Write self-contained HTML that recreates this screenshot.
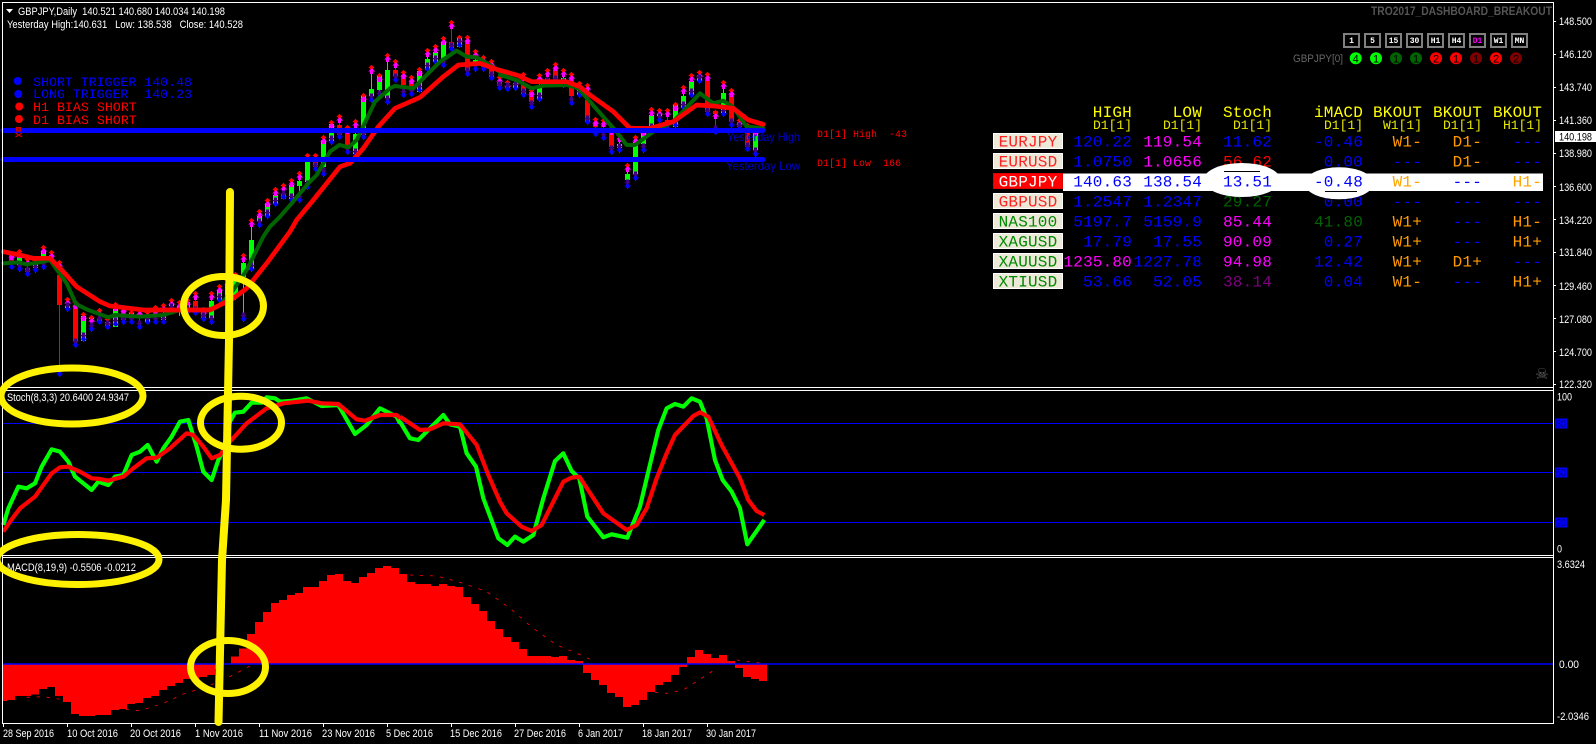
<!DOCTYPE html>
<html>
<head>
<meta charset="utf-8">
<title>GBPJPY,Daily</title>
<style>
html,body{margin:0;padding:0;background:#000;width:1596px;height:744px;overflow:hidden}
svg{display:block}
.s{font-family:"Liberation Sans",sans-serif;font-size:11px;fill:#fff}
.m{font-family:"Liberation Mono",monospace;font-size:16px;letter-spacing:.2px;text-anchor:end}
.h{fill:#ff0}
.u{font-family:"Liberation Mono",monospace;font-size:13px;fill:#e8e800;text-anchor:end}
.b{fill:#00f}.p{fill:#f0f}.r{fill:#f00}.g{fill:#006400}.v{fill:#800080}.o{fill:#f90}
.t{font-family:"Liberation Mono",monospace;font-size:16px;letter-spacing:.2px;text-anchor:middle}
.l{font-family:"Liberation Mono",monospace;font-size:13.3px}
.w{font-family:"Liberation Mono",monospace;font-size:8px;font-weight:bold;fill:#fff;text-anchor:middle}
.n{font-family:"Liberation Sans",sans-serif;font-size:11px;fill:#000;text-anchor:middle}
</style>
</head>
<body>
<svg width="1596" height="744" viewBox="0 0 1596 744" xmlns="http://www.w3.org/2000/svg">
<defs>
<marker id="mh" markerUnits="userSpaceOnUse" markerWidth="10" markerHeight="12" refX="5" refY="0" orient="0" overflow="visible">
<g transform="translate(5,0)" shape-rendering="crispEdges"><polygon fill="#f00" points="0,0 3.5,3 1.5,3 1.5,4 -1.5,4 -1.5,3 -3.5,3"/><polygon fill="#f0f" points="0,3 3.5,6.5 1.5,6.5 1.5,9 -1.5,9 -1.5,6.5 -3.5,6.5"/></g>
</marker>
<marker id="ml" markerUnits="userSpaceOnUse" markerWidth="10" markerHeight="12" refX="5" refY="10" orient="0" overflow="visible">
<g transform="translate(5,10)" shape-rendering="crispEdges"><polygon fill="#00f" points="0,0 3.5,-3.5 1.5,-3.5 1.5,-5 -1.5,-5 -1.5,-3.5 -3.5,-3.5"/><polygon fill="#400080" points="0,-4 3.5,-7 1.5,-7 1.5,-9.5 -1.5,-9.5 -1.5,-7 -3.5,-7"/></g>
</marker>
</defs>

<rect width="1596" height="744" fill="#000"/>

<!-- wicks -->
<g shape-rendering="crispEdges" fill="none">
<path stroke="#f00" stroke-width="1" d="M11.5 251V267M27.5 257V277M51.5 250V265M59.5 260V377M75.5 300V348M99.5 308V323M107.5 317V330M123.5 305V325M139.5 308V330M155.5 305V323M195.5 291V316M203.5 307V322M283.5 183V200M315.5 153V172M339.5 114V140M347.5 125V155M395.5 59V83M403.5 70V98M411.5 75V97M451.5 20V52M467.5 35V77M483.5 55V72M491.5 59V81M499.5 75V91M507.5 80V92M523.5 72V98M531.5 88V110M547.5 68V87M555.5 62V85M571.5 72V106M587.5 83V125M595.5 117V137M603.5 118V141M611.5 126V155M667.5 108V132M707.5 72V117M715.5 110V135M731.5 88V128M739.5 118V132M747.5 123V152"/>
<path stroke="#0f0" stroke-width="1" d="M19.5 249V272M35.5 258V273M43.5 245V270M67.5 297V312M83.5 312V342M91.5 315V332M115.5 302V327M131.5 310V323M147.5 310V323M163.5 303V323M171.5 298V313M179.5 300V316M187.5 298V315M211.5 291V325M219.5 284V303M227.5 278V300M235.5 272V300M243.5 253V322M251.5 218V272M259.5 209V228M267.5 198V219M275.5 187V207M291.5 178V203M299.5 171V203M307.5 153V190M323.5 135V177M331.5 120V145M355.5 119V158M363.5 93V140M371.5 65V103M379.5 73V100M387.5 53V105M419.5 67V93M427.5 48V72M435.5 44V65M443.5 36V68M459.5 35V48M475.5 49V72M515.5 78V91M539.5 73V102M563.5 68V88M579.5 81V98M619.5 133V153M627.5 163V189M635.5 135V181M643.5 127V153M651.5 107V133M659.5 108V123M675.5 102V128M683.5 85V111M691.5 73V98M699.5 70V84M723.5 80V117M755.5 127V157"/>
<path stroke="#f00" stroke-width="5" d="M11.5 253V261M27.5 268V272M51.5 255V262M59.5 275V305M75.5 305V341M99.5 318V321M107.5 322V326M123.5 310V320M139.5 314V317M155.5 312V316M195.5 301V310M203.5 313V318M283.5 193V199M315.5 162V167M339.5 125V135M347.5 133V148M395.5 70V77M403.5 75V85M411.5 81V87M451.5 42V48M467.5 40V70M483.5 62V67M491.5 67V77M499.5 82V86M507.5 85V88M523.5 85V94M531.5 92V102M547.5 78V84M555.5 68V82M571.5 78V96M587.5 100V122M595.5 123V127M603.5 125V127M611.5 128V147M667.5 120V126M707.5 79V112M715.5 111V114M731.5 93V122M739.5 122V127M747.5 128V147"/>
<path stroke="#0f0" stroke-width="5" d="M19.5 257V265M35.5 262V268M43.5 251V258M67.5 305V308M83.5 316V341M91.5 317V319M115.5 309V327M131.5 313V318M147.5 318V323M163.5 316V320M171.5 304V307M179.5 306V309M187.5 302V310M211.5 301V319M219.5 290V300M227.5 284V295M235.5 280V295M243.5 263V277M251.5 240V270M259.5 216V222M267.5 203V217M275.5 195V204M291.5 185V199M299.5 181V186M307.5 162V182M323.5 140V167M331.5 124V141M355.5 134V154M363.5 95V135M371.5 89V96M379.5 75V90M387.5 70V98M419.5 71V92M427.5 59V70M435.5 52V62M443.5 42V60M459.5 38V47M475.5 60V65M515.5 83V88M539.5 85V100M563.5 78V85M579.5 88V95M619.5 144V148M627.5 174V180M635.5 142V174M643.5 132V144M651.5 115V128M659.5 114V117M675.5 105V127M683.5 96V108M691.5 81V95M699.5 78V81M723.5 93V113M755.5 133V150"/>
</g>
<!-- markers -->
<polyline fill="none" stroke="none" marker-start="url(#mh)" marker-mid="url(#mh)" marker-end="url(#mh)" points="11.5,251 19.5,249 27.5,257 35.5,258 43.5,245 51.5,250 59.5,260 67.5,297 75.5,300 83.5,312 91.5,315 99.5,308 107.5,317 115.5,302 123.5,305 131.5,310 139.5,308 147.5,310 155.5,305 163.5,303 171.5,298 179.5,300 187.5,298 195.5,291 203.5,307 211.5,291 219.5,284 227.5,278 235.5,272 243.5,253 251.5,218 259.5,209 267.5,198 275.5,187 283.5,183 291.5,178 299.5,171 307.5,153 315.5,153 323.5,135 331.5,120 339.5,114 347.5,125 355.5,119 363.5,93 371.5,65 379.5,73 387.5,53 395.5,59 403.5,70 411.5,75 419.5,67 427.5,48 435.5,44 443.5,36 451.5,20 459.5,35 467.5,35 475.5,49 483.5,55 491.5,59 499.5,75 507.5,80 515.5,78 523.5,72 531.5,88 539.5,73 547.5,68 555.5,62 563.5,68 571.5,72 579.5,81 587.5,83 595.5,117 603.5,118 611.5,126 619.5,133 627.5,163 635.5,135 643.5,127 651.5,107 659.5,108 667.5,108 675.5,102 683.5,85 691.5,73 699.5,70 707.5,72 715.5,110 723.5,80 731.5,88 739.5,118 747.5,123 755.5,127"/>
<polyline fill="none" stroke="none" marker-start="url(#ml)" marker-mid="url(#ml)" marker-end="url(#ml)" points="11.5,270 19.5,272 27.5,277 35.5,273 43.5,270 59.5,377 67.5,312 75.5,348 83.5,342 91.5,332 99.5,325 107.5,330 115.5,327 123.5,325 131.5,325 139.5,330 147.5,325 155.5,325 163.5,325 171.5,313 187.5,315 195.5,316 203.5,322 211.5,325 219.5,303 243.5,322 251.5,272 259.5,228 267.5,219 275.5,207 283.5,200 291.5,203 299.5,203 307.5,190 315.5,172 323.5,177 331.5,145 339.5,140 347.5,155 355.5,158 363.5,140 371.5,103 379.5,100 387.5,105 395.5,83 403.5,98 411.5,97 419.5,93 427.5,72 435.5,65 443.5,68 451.5,52 459.5,48 467.5,77 475.5,72 483.5,72 491.5,81 499.5,91 507.5,92 515.5,91 523.5,98 531.5,110 539.5,102 547.5,87 555.5,85 563.5,88 571.5,106 579.5,98 587.5,125 595.5,137 603.5,141 611.5,155 619.5,153 627.5,189 635.5,181 643.5,153 651.5,133 659.5,123 667.5,132 675.5,128 683.5,111 691.5,98 699.5,84 707.5,117 715.5,135 723.5,117 731.5,128 739.5,132 747.5,152 755.5,157"/>

<!-- EMA lines -->
<g fill="none" stroke-linejoin="round" stroke-linecap="round">
<g stroke="#006400" stroke-width="12">
<polyline transform="translate(0,230) scale(.3333)" points="10,100 55,97 80,103 120,97 150,90 175,125 200,160 228,222 260,238 325,262 345,255 420,260 490,255 540,240 630,238 660,225 700,180 740,120 790,20 810,-10 840,-40"/>
<polyline transform="translate(280,20) scale(.3333)" points="0,590 35,550 85,490 110,465 150,395 178,375 205,382 230,360 285,245 330,205 345,198 400,205 440,165 480,125 530,92 560,110 590,112 630,135 680,170 720,185"/>
<polyline transform="translate(500,20) scale(.3333)" points="0,165 50,180 95,205 130,197 200,195 235,205 270,245 345,330 380,375 405,375 460,335 520,305 600,220 640,250 670,242 700,262 740,320 790,325"/>
</g>
<g stroke="#f00" stroke-width="14">
<polyline transform="translate(0,230) scale(.3333)" points="10,65 60,75 100,85 150,85 190,125 230,170 300,215 330,228 430,240 630,240 700,205 740,175 800,100 870,5 890,-30"/>
<polyline transform="translate(280,20) scale(.3333)" points="50,600 100,540 180,440 210,430 250,385 295,320 345,265 420,232 490,170 535,135 600,130 650,148 720,168"/>
<polyline transform="translate(500,20) scale(.3333)" points="60,170 95,185 200,185 240,200 270,225 340,275 390,325 450,325 520,305 590,255 640,258 700,265 745,300 790,313"/>
</g>
</g>

<!-- D1 blue lines -->
<g stroke="#00f" stroke-width="5" stroke-linecap="round" fill="none">
<path d="M3 130.5H763"/><path d="M3 159.5H763"/>
</g>

<!-- Stochastic -->
<g stroke="#00f" stroke-width="1" shape-rendering="crispEdges">
<path d="M3 423.5H1553M3 472.5H1553M3 522.5H1553M3 664H1553"/>
</g>
<g fill="none" stroke-linejoin="round">
<g stroke="#0f0" stroke-width="12.5">
<polyline transform="translate(0,360) scale(.3333)" points="10,495 25,445 55,380 80,385 105,370 125,320 155,268 180,275 205,305 225,350 275,390 295,365 325,375 345,350 370,345 395,285 420,275 443,255 470,305 490,265 515,230 540,185 565,180 590,260 610,335 635,360 655,300 670,270 690,185 705,158 730,155 755,128 785,128 800,112 825,115 840,125 870,123 920,115 965,138 1015,135 1065,222 1100,195 1140,145 1170,160 1190,170 1200,190"/>
<polyline transform="translate(400,385) scale(.3333)" points="0,110 30,160 55,165 90,130 130,90 150,118 180,125 200,205 228,245 250,340 295,460 322,480 345,455 370,470 400,450 430,340 465,228 490,205 515,258 538,280 562,395 610,457 635,448 682,458 720,365 745,260 775,135 800,70 825,57 850,65 875,40 900,50 920,100 945,225 968,285 995,320 1020,370 1042,478 1093,405"/>
</g>
<g stroke="#f00" stroke-width="12.5">
<polyline transform="translate(0,360) scale(.3333)" points="10,515 30,485 60,445 105,410 155,340 180,322 205,320 240,335 275,355 300,357 325,362 370,350 400,325 440,295 470,293 510,265 560,220 580,225 610,260 635,295 660,285 690,245 740,190 800,145 850,130 925,122 965,130 1015,132 1070,178 1095,182 1140,165 1190,165 1200,175"/>
<polyline transform="translate(400,385) scale(.3333)" points="0,95 60,135 90,133 130,115 180,118 230,180 265,270 300,350 320,385 365,425 395,438 425,420 490,290 515,278 538,275 610,385 680,435 710,420 740,370 770,280 800,205 825,150 880,93 900,82 925,95 965,180 1020,280 1045,345 1070,378 1093,390"/>
</g>
</g>

<!-- MACD -->
<g fill="#f00" shape-rendering="crispEdges">
<path transform="translate(0,540) scale(.3333)" d="M9 372V483H21V480H45V468H93V463H117V447H141V441H165V468H189V486H213V522H237V528H285V525H333V510H357V507H381V492H405V489H429V474H453V468H477V450H501V438H525V429H549V417H597V411H621V405H645V387H669V372Z"/>
<path transform="translate(0,540) scale(.3333)" d="M669 372V370H693V350H717V326H741V282H765V246H789V216H813V189H837V180H861V165H885V159H909V141H957V123H981V105H1005V102H1029V123H1053V129H1077V111H1101V99H1125V84H1149V78H1173V84H1197V102H1200V372Z"/>
<path transform="translate(400,540) scale(.3333)" d="M0 372V102H21V126H45V132H93V138H117V132H141V138H165V141H189V171H213V192H237V213H261V243H285V267H309V291H333V306H357V327H381V348H453V351H477V348H501V360H525V363H549V372ZM549 372V399H573V420H597V435H621V459H645V471H669V501H693V495H717V480H741V456H765V435H789V426H813V405H837V381H861V372ZM861 372V351H885V330H909V342H933V354H957V345H981V363H1005V372ZM1005 372V384H1029V411H1053V417H1077V423H1101V372Z"/>
</g>
<g fill="none" stroke="#f00" stroke-width="2.5" stroke-dasharray="10 20">
<polyline transform="translate(0,540) scale(.3333)" points="80,472 130,470 370,508 420,512 490,490 550,462 620,440 680,415 750,378"/>
<polyline transform="translate(400,540) scale(.3333)" points="30,105 110,108 190,130 260,155 330,205 400,265 470,315 550,348 585,365"/>
<polyline transform="translate(400,540) scale(.3333)" points="765,457 800,460 850,450 900,418 950,385"/>
<polyline transform="translate(400,540) scale(.3333)" points="1010,360 1085,370"/>
</g>
<path d="M3 664H1553" stroke="#00f" stroke-width="1.5"/>

<!-- Frames -->
<g stroke="#fff" stroke-width="1" fill="none" shape-rendering="crispEdges">
<path d="M2.5 2.5H1553.5V723.5H2.5Z"/>
<path d="M2 387.5H1553M2 390.5H1553M2 555.5H1553M2 557.5H1553"/>
<path d="M3.5 724V727M67.5 724V727M131.5 724V727M195.5 724V727M259.5 724V727M323.5 724V727M387.5 724V727M451.5 724V727M515.5 724V727M579.5 724V727M643.5 724V727M707.5 724V727"/>
<path d="M1554 21.5H1556M1554 54.5H1556M1554 87.5H1556M1554 120.5H1556M1554 153.5H1556M1554 186.5H1556M1554 219.5H1556M1554 252.5H1556M1554 285.5H1556M1554 318.5H1556M1554 351.5H1556M1554 384.5H1556"/>
</g>

<!-- Top-left text -->
<polygon points="6,9 13,9 9.5,13" fill="#fff"/>
<text class="s" x="18" y="15" textLength="207" lengthAdjust="spacingAndGlyphs" xml:space="preserve">GBPJPY,Daily  140.521 140.680 140.034 140.198</text>
<text class="s" x="7" y="28" textLength="236" lengthAdjust="spacingAndGlyphs" xml:space="preserve">Yesterday High:140.631   Low: 138.538   Close: 140.528</text>
<text class="s" x="7" y="401" textLength="122" lengthAdjust="spacingAndGlyphs">Stoch(8,3,3) 20.6400 24.9347</text>
<text class="s" x="7" y="571" textLength="129" lengthAdjust="spacingAndGlyphs">MACD(8,19,9) -0.5506 -0.0212</text>

<!-- Legend -->
<circle cx="17.7" cy="81" r="4" fill="#00f"/><circle cx="18.3" cy="94" r="4" fill="#00f"/>
<circle cx="19.3" cy="106.5" r="4" fill="#f00"/><circle cx="19" cy="119" r="4" fill="#f00"/>
<text class="l b" x="33" y="86" textLength="159" xml:space="preserve">SHORT TRIGGER 140.48</text>
<text class="l b" x="33" y="98" textLength="159" xml:space="preserve">LONG TRIGGER  140.23</text>
<text class="l r" x="33" y="111">H1 BIAS SHORT</text>
<text class="l r" x="33" y="124">D1 BIAS SHORT</text>
<g fill="none" stroke="#d00000" stroke-width="1.2">
<rect x="16.5" y="127.5" width="4" height="3.5" fill="#a00000"/>
<path d="M15.5 133L22 137M22 133L15.5 137"/>
</g>

<!-- Yesterday labels -->
<text x="727" y="141" textLength="73" lengthAdjust="spacingAndGlyphs" style="font-family:'Liberation Sans',sans-serif;font-size:12px;fill:#0000c8">Yesterday High</text>
<text x="726" y="170" textLength="74" lengthAdjust="spacingAndGlyphs" style="font-family:'Liberation Sans',sans-serif;font-size:12px;fill:#0000c8">Yesterday Low</text>
<text x="817" y="137" textLength="90" style="font-family:'Liberation Mono',monospace;font-size:10px;fill:#f00" xml:space="preserve">D1[1] High  -43</text>
<text x="817" y="166" textLength="84" style="font-family:'Liberation Mono',monospace;font-size:10px;fill:#f00" xml:space="preserve">D1[1] Low  166</text>

<!-- Top-right -->
<text x="1371" y="15" textLength="181" lengthAdjust="spacingAndGlyphs" style="font-family:'Liberation Sans',sans-serif;font-size:12px;font-weight:bold;fill:#555">TRO2017_DASHBOARD_BREAKOUT</text>
<g fill="#000" stroke="#808080" stroke-width="2">
<rect x="1344" y="34" width="15" height="13"/><rect x="1365" y="34" width="15" height="13"/><rect x="1386" y="34" width="15" height="13"/><rect x="1407" y="34" width="15" height="13"/><rect x="1428" y="34" width="15" height="13"/><rect x="1449" y="34" width="15" height="13"/><rect x="1470" y="34" width="15" height="13"/><rect x="1491" y="34" width="15" height="13"/><rect x="1512" y="34" width="15" height="13"/>
</g>
<text class="w" x="1351.5" y="43">1</text><text class="w" x="1372.5" y="43">5</text><text class="w" x="1393.5" y="43">15</text><text class="w" x="1414.5" y="43">30</text><text class="w" x="1435.5" y="43">H1</text><text class="w" x="1456.5" y="43">H4</text><text class="w" x="1477.5" y="43" style="fill:#f0f">D1</text><text class="w" x="1498.5" y="43">W1</text><text class="w" x="1519.5" y="43">MN</text>
<text x="1293" y="62" textLength="50" lengthAdjust="spacingAndGlyphs" style="font-family:'Liberation Sans',sans-serif;font-size:11px;fill:#666">GBPJPY[0]</text>
<circle cx="1355.7" cy="58.3" r="6" fill="#0f0"/><circle cx="1376" cy="58.3" r="6" fill="#0f0"/><circle cx="1396" cy="58.3" r="6" fill="#006400"/><circle cx="1416" cy="58.3" r="6" fill="#006400"/><circle cx="1436" cy="58.3" r="6" fill="#f00"/><circle cx="1456" cy="58.3" r="6" fill="#f00"/><circle cx="1476" cy="58.3" r="6" fill="#800000"/><circle cx="1496" cy="58.3" r="6" fill="#f00"/><circle cx="1516" cy="58.3" r="6" fill="#800000"/>
<text class="n" x="1355.7" y="62.3">4</text><text class="n" x="1376" y="62.3">1</text><text class="n" x="1396" y="62.3">1</text><text class="n" x="1416" y="62.3">1</text><text class="n" x="1436" y="62.3">2</text><text class="n" x="1456" y="62.3">1</text><text class="n" x="1476" y="62.3">1</text><text class="n" x="1496" y="62.3">2</text><text class="n" x="1516" y="62.3">2</text>

<!-- Axis labels -->
<g>
<text class="s" x="1559" y="25" textLength="33" lengthAdjust="spacingAndGlyphs">148.500</text>
<text class="s" x="1559" y="58" textLength="33" lengthAdjust="spacingAndGlyphs">146.120</text>
<text class="s" x="1559" y="91" textLength="33" lengthAdjust="spacingAndGlyphs">143.740</text>
<text class="s" x="1559" y="124" textLength="33" lengthAdjust="spacingAndGlyphs">141.360</text>
<text class="s" x="1559" y="157" textLength="33" lengthAdjust="spacingAndGlyphs">138.980</text>
<text class="s" x="1559" y="191" textLength="33" lengthAdjust="spacingAndGlyphs">136.600</text>
<text class="s" x="1559" y="224" textLength="33" lengthAdjust="spacingAndGlyphs">134.220</text>
<text class="s" x="1559" y="256" textLength="33" lengthAdjust="spacingAndGlyphs">131.840</text>
<text class="s" x="1559" y="290" textLength="33" lengthAdjust="spacingAndGlyphs">129.460</text>
<text class="s" x="1559" y="323" textLength="33" lengthAdjust="spacingAndGlyphs">127.080</text>
<text class="s" x="1559" y="356" textLength="33" lengthAdjust="spacingAndGlyphs">124.700</text>
<text class="s" x="1559" y="388" textLength="33" lengthAdjust="spacingAndGlyphs">122.320</text>
<rect x="1555" y="131" width="41" height="11" fill="#fff"/>
<text class="s" x="1559" y="140.5" textLength="33" lengthAdjust="spacingAndGlyphs" style="fill:#000">140.198</text>
<text class="s" x="1557" y="400.5" textLength="15" lengthAdjust="spacingAndGlyphs">100</text>
<rect x="1555" y="418.5" width="12" height="10" fill="#00f"/><rect x="1555" y="467.5" width="12" height="10" fill="#00f"/><rect x="1555" y="517.5" width="12" height="10" fill="#00f"/>
<text class="s" x="1556" y="427.5" textLength="10" lengthAdjust="spacingAndGlyphs" style="fill:#000080">80</text>
<text class="s" x="1556" y="476.5" textLength="10" lengthAdjust="spacingAndGlyphs" style="fill:#000080">50</text>
<text class="s" x="1556" y="526.5" textLength="10" lengthAdjust="spacingAndGlyphs" style="fill:#000080">20</text>
<text class="s" x="1557" y="552.5" textLength="5" lengthAdjust="spacingAndGlyphs">0</text>
<text class="s" x="1557" y="568" textLength="28" lengthAdjust="spacingAndGlyphs">3.6324</text>
<text class="s" x="1559" y="668" textLength="20" lengthAdjust="spacingAndGlyphs">0.00</text>
<text class="s" x="1557" y="720" textLength="32" lengthAdjust="spacingAndGlyphs">-2.0346</text>
</g>
<text x="1542" y="379" style="font-family:'DejaVu Sans',sans-serif;font-size:15px;fill:#666;text-anchor:middle">☠</text>

<!-- Date labels -->
<g>
<text class="s" x="3" y="737" textLength="51" lengthAdjust="spacingAndGlyphs">28 Sep 2016</text>
<text class="s" x="67" y="737" textLength="51" lengthAdjust="spacingAndGlyphs">10 Oct 2016</text>
<text class="s" x="130" y="737" textLength="51" lengthAdjust="spacingAndGlyphs">20 Oct 2016</text>
<text class="s" x="195" y="737" textLength="48" lengthAdjust="spacingAndGlyphs">1 Nov 2016</text>
<text class="s" x="259" y="737" textLength="53" lengthAdjust="spacingAndGlyphs">11 Nov 2016</text>
<text class="s" x="322" y="737" textLength="53" lengthAdjust="spacingAndGlyphs">23 Nov 2016</text>
<text class="s" x="386" y="737" textLength="47" lengthAdjust="spacingAndGlyphs">5 Dec 2016</text>
<text class="s" x="450" y="737" textLength="52" lengthAdjust="spacingAndGlyphs">15 Dec 2016</text>
<text class="s" x="514" y="737" textLength="52" lengthAdjust="spacingAndGlyphs">27 Dec 2016</text>
<text class="s" x="578" y="737" textLength="45" lengthAdjust="spacingAndGlyphs">6 Jan 2017</text>
<text class="s" x="642" y="737" textLength="50" lengthAdjust="spacingAndGlyphs">18 Jan 2017</text>
<text class="s" x="706" y="737" textLength="50" lengthAdjust="spacingAndGlyphs">30 Jan 2017</text>
</g>

<!-- Dashboard header -->
<text class="m h" x="1132" y="117">HIGH</text><text class="m h" x="1202" y="117">LOW</text><text class="m h" x="1272" y="117">Stoch</text><text class="m h" x="1363" y="117">iMACD</text><text class="m h" x="1422" y="117">BKOUT</text><text class="m h" x="1482" y="117">BKOUT</text><text class="m h" x="1542" y="117">BKOUT</text>
<text class="u" x="1132" y="129">D1[1]</text><text class="u" x="1202" y="129">D1[1]</text><text class="u" x="1272" y="129">D1[1]</text><text class="u" x="1363" y="129">D1[1]</text><text class="u" x="1422" y="129">W1[1]</text><text class="u" x="1482" y="129">D1[1]</text><text class="u" x="1542" y="129">H1[1]</text>

<!-- Rows 1,2,4..8 -->
<g>
<text class="m b" x="1132" y="146.5">120.22</text><text class="m p" x="1202" y="146.5">119.54</text><text class="m b" x="1272" y="146.5">11.62</text><text class="m b" x="1363" y="146.5">-0.46</text><text class="m o" x="1422" y="146.5">W1-</text><text class="m o" x="1482" y="146.5">D1-</text><text class="m b" x="1542" y="146.5">---</text>
<text class="m b" x="1132" y="166.5">1.0750</text><text class="m p" x="1202" y="166.5">1.0656</text><text class="m r" x="1272" y="166.5">56.62</text><text class="m b" x="1363" y="166.5">0.00</text><text class="m b" x="1422" y="166.5">---</text><text class="m o" x="1482" y="166.5">D1-</text><text class="m b" x="1542" y="166.5">---</text>
<text class="m b" x="1132" y="206.5">1.2547</text><text class="m b" x="1202" y="206.5">1.2347</text><text class="m g" x="1272" y="206.5">29.27</text><text class="m b" x="1363" y="206.5">0.00</text><text class="m b" x="1422" y="206.5">---</text><text class="m b" x="1482" y="206.5">---</text><text class="m b" x="1542" y="206.5">---</text>
<text class="m b" x="1132" y="226.5">5197.7</text><text class="m b" x="1202" y="226.5">5159.9</text><text class="m p" x="1272" y="226.5">85.44</text><text class="m g" x="1363" y="226.5">41.80</text><text class="m o" x="1422" y="226.5">W1+</text><text class="m b" x="1482" y="226.5">---</text><text class="m o" x="1542" y="226.5">H1-</text>
<text class="m b" x="1132" y="246.5">17.79</text><text class="m b" x="1202" y="246.5">17.55</text><text class="m p" x="1272" y="246.5">90.09</text><text class="m b" x="1363" y="246.5">0.27</text><text class="m o" x="1422" y="246.5">W1+</text><text class="m b" x="1482" y="246.5">---</text><text class="m o" x="1542" y="246.5">H1+</text>
<text class="m p" x="1132" y="266.5">1235.80</text><text class="m b" x="1202" y="266.5">1227.78</text><text class="m p" x="1272" y="266.5">94.98</text><text class="m b" x="1363" y="266.5">12.42</text><text class="m o" x="1422" y="266.5">W1+</text><text class="m o" x="1482" y="266.5">D1+</text><text class="m b" x="1542" y="266.5">---</text>
<text class="m b" x="1132" y="286.5">53.66</text><text class="m b" x="1202" y="286.5">52.05</text><text class="m v" x="1272" y="286.5">38.14</text><text class="m b" x="1363" y="286.5">0.04</text><text class="m o" x="1422" y="286.5">W1-</text><text class="m b" x="1482" y="286.5">---</text><text class="m o" x="1542" y="286.5">H1+</text>
</g>

<!-- White highlight -->
<rect x="1063" y="173.5" width="480" height="17.5" fill="#fff"/>
<ellipse cx="1242" cy="180" rx="38.5" ry="17" fill="#fff"/>
<ellipse cx="1339" cy="183.3" rx="34.5" ry="16" fill="#fff"/>
<path d="M1224 171.5H1260M1325 191.5H1357" stroke="#000" stroke-width="1"/>
<text class="m b" x="1132" y="186.5">140.63</text><text class="m b" x="1202" y="186.5">138.54</text><text class="m b" x="1272" y="186.5">13.51</text><text class="m b" x="1363" y="186.5">-0.48</text><text class="m" x="1422" y="186.5" style="fill:#ffa500">W1-</text><text class="m b" x="1482" y="186.5">---</text><text class="m" x="1542" y="186.5" style="fill:#ffa500">H1-</text>

<!-- Buttons -->
<g fill="#ece9d8" stroke="#fff" stroke-width="1" shape-rendering="crispEdges">
<rect x="993.5" y="133.5" width="69" height="15"/><rect x="993.5" y="153.5" width="69" height="15"/><rect x="993.5" y="193.5" width="69" height="15"/><rect x="993.5" y="213.5" width="69" height="15"/><rect x="993.5" y="233.5" width="69" height="15"/><rect x="993.5" y="253.5" width="69" height="15"/><rect x="993.5" y="273.5" width="69" height="15"/>
<rect x="993.5" y="173.5" width="69" height="15" fill="#f00" stroke="#e00000"/>
</g>
<text class="t" x="1028" y="146.5" style="fill:#f22">EURJPY</text><text class="t" x="1028" y="166.5" style="fill:#f22">EURUSD</text><text class="t" x="1028" y="186.5" style="fill:#fff">GBPJPY</text><text class="t" x="1028" y="206.5" style="fill:#f22">GBPUSD</text><text class="t" x="1028" y="226.5" style="fill:#080">NAS100</text><text class="t" x="1028" y="246.5" style="fill:#080">XAGUSD</text><text class="t" x="1028" y="266.5" style="fill:#080">XAUUSD</text><text class="t" x="1028" y="286.5" style="fill:#080">XTIUSD</text>

<!-- Yellow annotations -->
<g fill="none" stroke="#fff200" stroke-width="7">
<ellipse cx="72" cy="396" rx="71" ry="28"/>
<ellipse cx="78" cy="559.5" rx="81" ry="25"/>
<ellipse cx="223.5" cy="306" rx="40" ry="29.5"/>
<ellipse cx="241" cy="422.7" rx="40.5" ry="26.5"/>
<ellipse cx="228" cy="667" rx="37.5" ry="26.5"/>
<polyline stroke-width="8" stroke-linecap="round" stroke-linejoin="round" points="230,192 229,340 226,500 222,560 218.5,722"/>
</g>
</svg>
</body>
</html>
